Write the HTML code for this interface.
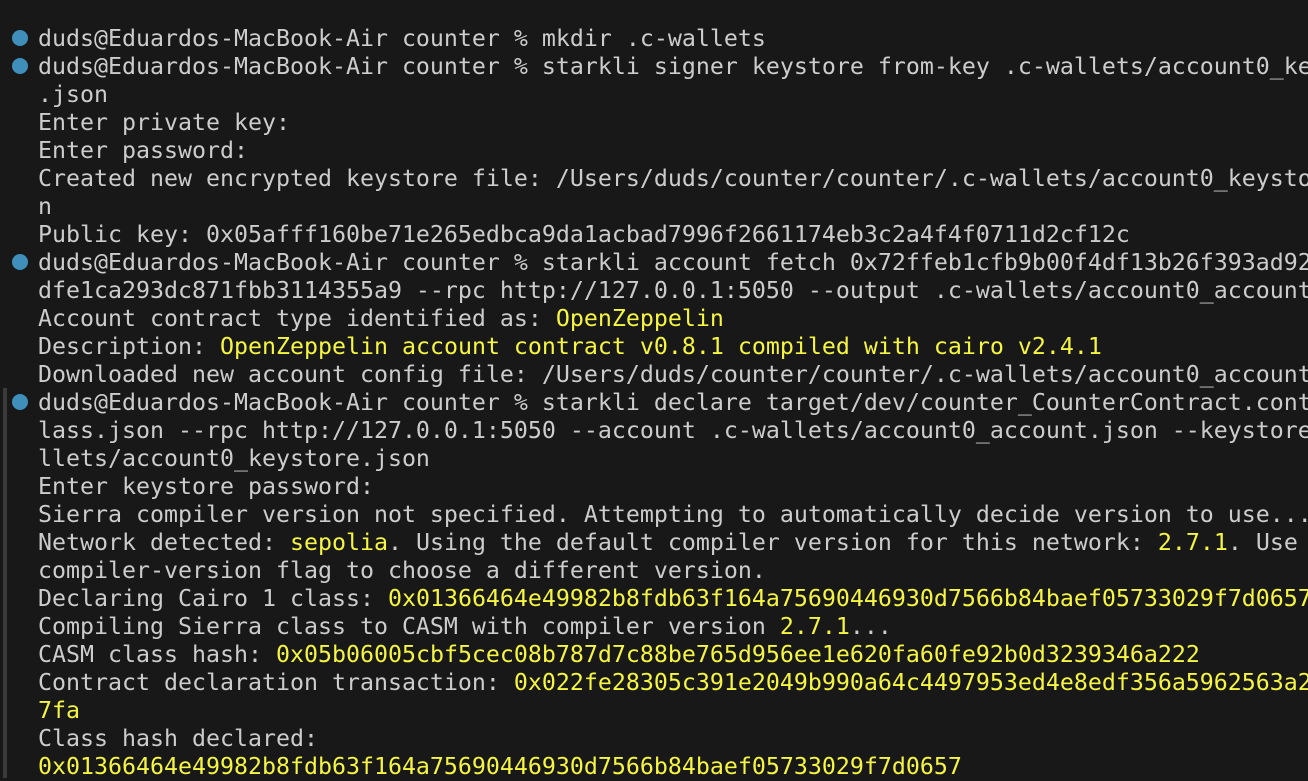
<!DOCTYPE html>
<html><head><meta charset="utf-8"><style>
html,body{margin:0;padding:0;background:#181818;width:1308px;height:778px;overflow:hidden}
.t{position:absolute;left:38px;top:25px;width:1270px;overflow:hidden;font-family:"DejaVu Sans Mono","Liberation Mono",monospace;font-size:23.25px;line-height:28px;color:#cccccc;white-space:pre}
.y{color:#f5f543}
.d{position:absolute;left:12px;width:16px;height:16px;border-radius:50%;background:#3f8fba}
.bar{position:absolute;left:3px;top:388px;width:4px;height:390px;background:#3a3a3a}
</style></head><body>
<div class="bar"></div>
<div class="d" style="top:30px"></div>
<div class="d" style="top:58px"></div>
<div class="d" style="top:254px"></div>
<div class="d" style="top:394px"></div>
<div class="t">duds@Eduardos-MacBook-Air counter % mkdir .c-wallets
duds@Eduardos-MacBook-Air counter % starkli signer keystore from-key .c-wallets/account0_keystore
.json
Enter private key:
Enter password:
Created new encrypted keystore file: /Users/duds/counter/counter/.c-wallets/account0_keystore.jso
n
Public key: 0x05afff160be71e265edbca9da1acbad7996f2661174eb3c2a4f4f0711d2cf12c
duds@Eduardos-MacBook-Air counter % starkli account fetch 0x72ffeb1cfb9b00f4df13b26f393ad92
dfe1ca293dc871fbb3114355a9 --rpc http://127.0.0.1:5050 --output .c-wallets/account0_account.json
Account contract type identified as: <span class="y">OpenZeppelin</span>
Description: <span class="y">OpenZeppelin account contract v0.8.1 compiled with cairo v2.4.1</span>
Downloaded new account config file: /Users/duds/counter/counter/.c-wallets/account0_account.json
duds@Eduardos-MacBook-Air counter % starkli declare target/dev/counter_CounterContract.contract_c
lass.json --rpc http://127.0.0.1:5050 --account .c-wallets/account0_account.json --keystore .c-wa
llets/account0_keystore.json
Enter keystore password:
Sierra compiler version not specified. Attempting to automatically decide version to use...
Network detected: <span class="y">sepolia</span>. Using the default compiler version for this network: <span class="y">2.7.1</span>. Use the --
compiler-version flag to choose a different version.
Declaring Cairo 1 class: <span class="y">0x01366464e49982b8fdb63f164a75690446930d7566b84baef05733029f7d0657</span>
Compiling Sierra class to CASM with compiler version <span class="y">2.7.1</span>...
CASM class hash: <span class="y">0x05b06005cbf5cec08b787d7c88be765d956ee1e620fa60fe92b0d3239346a222</span>
Contract declaration transaction: <span class="y">0x022fe28305c391e2049b990a64c4497953ed4e8edf356a5962563a2</span>
<span class="y">7fa</span>
Class hash declared:
<span class="y">0x01366464e49982b8fdb63f164a75690446930d7566b84baef05733029f7d0657</span></div>
</body></html>
